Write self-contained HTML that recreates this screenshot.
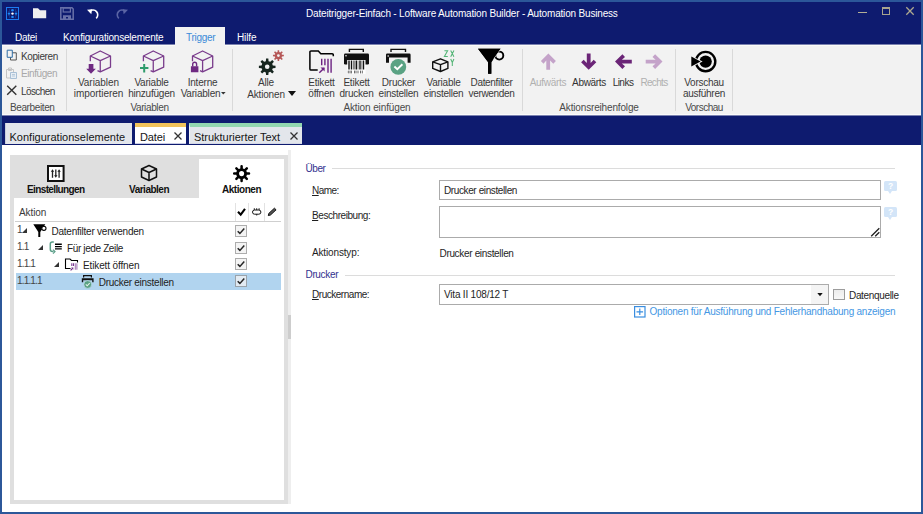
<!DOCTYPE html>
<html><head><meta charset="utf-8">
<style>
*{margin:0;padding:0;box-sizing:border-box}
html,body{width:923px;height:514px;overflow:hidden;background:#fff;font-family:"Liberation Sans",sans-serif}
.a{position:absolute;white-space:nowrap}
#win{position:absolute;left:0;top:0;width:923px;height:514px;border:2px solid #2c5799;background:#fff}
.navy{background:#0e1b6f}
.t{position:absolute;white-space:nowrap;line-height:1}
.rb{font-size:10px;color:#3a3a3a}
.gl{font-size:10px;color:#4a4a4a}
.sep{position:absolute;width:1px;background:#d9d9d9;top:49px;height:62px}
.dis{color:#a8a8a8}
svg{position:absolute;overflow:visible}

.cb{width:12px;height:12px;border:1px solid #a9a9a9;background:linear-gradient(#f3f3f3,#ececec)}
.cb::after{content:"";position:absolute;left:2px;top:2px;width:6px;height:3px;border-left:1.5px solid #222;border-bottom:1.5px solid #222;transform:rotate(-48deg) translate(0px,1px)}
.num{font-size:10px;color:#444}
.sec{font-size:10px;color:#32328e}
.lbl{font-size:10px;color:#1e1e1e}
.val{font-size:10px;color:#1e1e1e}
.inp{border:1px solid #ababab;background:#fff}
.help{width:13px;height:12px}
.help::before{content:"?";position:absolute;left:0;top:0;width:13px;height:10px;background:#d3e5f8;border-radius:1.5px;color:#fff;font-size:8.5px;font-weight:bold;text-align:center;line-height:10px}
.help::after{content:"";position:absolute;left:4px;top:10px;border-left:2.5px solid transparent;border-right:2.5px solid transparent;border-top:3px solid #d3e5f8}
</style></head><body>
<div id="win"></div>
<!-- title bar + menu -->
<div class="a navy" style="left:2px;top:2px;width:919px;height:42px"></div>
<div class="a" style="left:2px;top:44px;width:919px;height:1px;background:#7b82b0"></div>
<div class="a" style="left:2px;top:115px;width:919px;height:1px;background:#7b82b0"></div>
<div class="a navy" style="left:2px;top:116px;width:919px;height:29px"></div>
<div class="a" style="left:2px;top:114px;width:919px;height:1px;background:#fbfbfb"></div>

<!-- app icon -->
<svg style="left:6px;top:7px" width="13" height="13" viewBox="0 0 13 13">
 <rect x="0.5" y="0.5" width="12" height="12" fill="none" stroke="#1e7bf0" stroke-width="1"/>
 <rect x="3" y="3" width="7" height="7" fill="none" stroke="#1a5fc8" stroke-width="0.7" stroke-dasharray="1 1"/>
 <circle cx="6.5" cy="3.3" r="1.2" fill="#1e8af8"/><circle cx="6.5" cy="9.9" r="1.2" fill="#1e8af8"/>
 <circle cx="3" cy="6.6" r="1.2" fill="#1e8af8"/><circle cx="10" cy="6.6" r="1.2" fill="#1e8af8"/>
 <circle cx="6.5" cy="6.6" r="1.2" fill="#fff"/>
</svg>
<!-- folder -->
<svg style="left:33px;top:8px" width="14" height="11" viewBox="0 0 14 11">
 <path d="M0 0.3H5L7 2.3H13.2V10.2H0Z" fill="#efefef"/>
</svg>
<!-- save disabled -->
<svg style="left:60px;top:7px" width="14" height="13" viewBox="0 0 14 13">
 <path d="M0.8 0.8H12L13.2 2V12.2H0.8Z" fill="none" stroke="#6870a8" stroke-width="1.5"/>
 <rect x="3.2" y="1" width="7.2" height="4" fill="none" stroke="#6870a8" stroke-width="1.2"/>
 <path d="M3 8.2H11V12H8V10H6V12H3Z" fill="#6870a8"/>
</svg>
<!-- undo -->
<svg style="left:87px;top:8px" width="14" height="11" viewBox="0 0 14 11">
 <path d="M2.8 3.3A4.6 4.6 0 1 1 9.2 10.3" fill="none" stroke="#fff" stroke-width="1.6"/>
 <path d="M0 1.8L5.2 1.2L4.3 6.2Z" fill="#fff"/>
</svg>
<!-- redo disabled -->
<svg style="left:114px;top:8px" width="14" height="11" viewBox="0 0 14 11">
 <path d="M11.2 3.3A4.6 4.6 0 1 0 4.8 10.3" fill="none" stroke="#5a64a4" stroke-width="1.6"/>
 <path d="M14 1.8L8.8 1.2L9.7 6.2Z" fill="#5a64a4"/>
</svg>

<div class="t" style="left:306px;top:9.00px;font-size:10px;color:#fff;letter-spacing:-0.18px">Dateitrigger-Einfach - Loftware Automation Builder - Automation Business</div>

<!-- window controls -->
<div class="a" style="left:858px;top:11.5px;width:8.5px;height:1.5px;background:#b3ae95"></div>
<div class="a" style="left:881.5px;top:6.5px;width:8.5px;height:8px;border:1px solid #a8a48e;border-top-width:2px"></div>
<svg style="left:905.5px;top:7px" width="8" height="8" viewBox="0 0 8 8"><path d="M0.3 0.3L7.7 7.7M7.7 0.3L0.3 7.7" stroke="#ada88f" stroke-width="1.3"/></svg>

<!-- menu tabs -->
<div class="t" style="left:15px;top:32.60px;font-size:10px;color:#fff;letter-spacing:-0.3px">Datei</div>
<div class="t" style="left:63px;top:32.60px;font-size:10px;color:#fff;letter-spacing:-0.21px">Konfigurationselemente</div>
<div class="a" style="left:175px;top:27px;width:50px;height:19px;background:#f2f2f2"></div>
<div class="t" style="left:186px;top:32.60px;font-size:10px;color:#3b8ad8;letter-spacing:-0.29px">Trigger</div>
<div class="t" style="left:237px;top:32.60px;font-size:10px;color:#fff;letter-spacing:-0.1px">Hilfe</div>

<!-- ribbon -->
<div class="a" style="left:2px;top:45px;width:919px;height:69px;background:#f2f2f2"></div>
<div class="a" style="left:2px;top:45px;width:173px;height:1px;background:#fcfcf8"></div>
<div class="a" style="left:225px;top:45px;width:696px;height:1px;background:#fcfcf8"></div>


<!-- Bearbeiten group -->
<svg style="left:2px;top:46px" width="20" height="54" viewBox="0 0 20 54">
 <path d="M8.5 6.8H14.3V14H8.5Z" fill="none" stroke="#555" stroke-width="1"/>
 <path d="M5.2 4.2H10.3V11.3H5.2Z" fill="#f2f2f2" stroke="#2f6da6" stroke-width="1"/>
 <path d="M4.5 23.5H11.5V32H4.5Z" fill="none" stroke="#c4c4c4" stroke-width="1"/>
 <path d="M6.5 22H9.5V24.5H6.5Z" fill="none" stroke="#c4c4c4" stroke-width="1"/>
 <path d="M8.5 26.5H14.5V32.5H8.5Z" fill="#e8eef4" stroke="#a9c0d6" stroke-width="1"/>
 <path d="M10 28.5H13M10 30H13" stroke="#a9c0d6" stroke-width="0.8"/>
 <path d="M5.2 39.8L14.3 48.8M14.3 39.8L5.2 48.8" stroke="#333" stroke-width="1.4"/>
</svg>
<div class="t rb" style="left:21px;top:51.70px;letter-spacing:-0.4px">Kopieren</div>
<div class="t rb dis" style="left:21px;top:68.70px;letter-spacing:-0.42px">Einfügen</div>
<div class="t rb" style="left:21px;top:86.50px;letter-spacing:-0.6px">Löschen</div>
<div class="t gl" style="left:10px;top:102.90px;letter-spacing:-0.39px">Bearbeiten</div>
<div class="sep" style="left:66px"></div>

<!-- Variablen group -->
<svg style="left:80px;top:46px" width="40" height="32" viewBox="0 0 40 32">
 <g fill="none" stroke="#7a3c8c" stroke-width="1.3" stroke-linejoin="round">
  <path d="M10.3 15.3V10L20.25 5L30.5 10V21.2L20.25 25.9L17.5 24.6"/>
  <path d="M10.3 10L20.25 14.6L30.5 10M20.25 14.6V25.9"/>
 </g>
 <path d="M8.7 18H13.4V22.7H15.9L11 27.7L6.2 22.7H8.7Z" fill="#6f2a82"/>
</svg>
<svg style="left:135px;top:46px" width="40" height="32" viewBox="0 0 40 32">
 <g fill="none" stroke="#7a3c8c" stroke-width="1.3" stroke-linejoin="round">
  <path d="M8.4 15.3V10L18.26 5L28.7 10V21.2L18.26 25.9L15.6 24.6"/>
  <path d="M8.4 10L18.26 14.6L28.7 10M18.26 14.6V25.9"/>
 </g>
 <path d="M9.2 18V26.5M5 22.1H13.4" stroke="#2f9c6c" stroke-width="2"/>
</svg>
<svg style="left:185px;top:46px" width="40" height="32" viewBox="0 0 40 32">
 <g fill="none" stroke="#7a3c8c" stroke-width="1.3" stroke-linejoin="round">
  <path d="M7.5 15.3V10L17.6 5L27.7 10V21.2L17.6 25.9L15 24.6"/>
  <path d="M7.5 10L17.6 14.6L27.7 10M17.6 14.6V25.9"/>
 </g>
 <path d="M7.7 20.5V18.2A1.95 1.95 0 0 1 11.6 18.2V20.5" fill="none" stroke="#6f2a82" stroke-width="1.4"/>
 <rect x="5.9" y="20.25" width="7.5" height="6" fill="#6f2a82"/>
</svg>
<div class="t rb" style="left:58px;top:78.00px;width:81px;text-align:center;letter-spacing:-0.05px">Variablen<br><span style="position:relative;top:1.3px">importieren</span></div>
<div class="t rb" style="left:111px;top:78.00px;width:81px;text-align:center;letter-spacing:-0.22px">Variable<br><span style="position:relative;top:1.3px">hinzufügen</span></div>
<div class="t rb" style="left:162px;top:78.00px;width:81px;text-align:center;letter-spacing:-0.2px">Interne<br><span style="position:relative;top:1.3px;left:-2px">Variablen</span></div>
<svg style="left:221px;top:92px" width="5" height="3" viewBox="0 0 5 3"><path d="M0 0H4.6L2.3 2.6Z" fill="#333"/></svg>
<div class="t gl" style="left:109px;top:102.90px;width:81px;text-align:center;letter-spacing:-0.37px">Variablen</div>
<div class="sep" style="left:232px"></div>

<!-- Aktion einfuegen group -->
<svg style="left:252px;top:46px" width="40" height="34" viewBox="0 0 40 34">
 <path fill-rule="evenodd" fill="#17261f" d="M13.85 15.16 L14.05 12.48 L16.35 12.48 L16.55 15.16 L18.23 15.85 L20.27 14.10 L21.90 15.73 L20.15 17.77 L20.84 19.45 L23.52 19.65 L23.52 21.95 L20.84 22.15 L20.15 23.83 L21.90 25.87 L20.27 27.50 L18.23 25.75 L16.55 26.44 L16.35 29.12 L14.05 29.12 L13.85 26.44 L12.17 25.75 L10.13 27.50 L8.50 25.87 L10.25 23.83 L9.56 22.15 L6.88 21.95 L6.88 19.65 L9.56 19.45 L10.25 17.77 L8.50 15.73 L10.13 14.10 L12.17 15.85Z M12.90 20.80 a2.30 2.30 0 1 0 4.60 0 a2.30 2.30 0 1 0 -4.60 0Z"/>
 <path fill-rule="evenodd" fill="#b65858" d="M25.54 6.00 L25.65 4.15 L27.15 4.15 L27.26 6.00 L28.33 6.45 L29.72 5.21 L30.79 6.28 L29.55 7.67 L30.00 8.74 L31.85 8.85 L31.85 10.35 L30.00 10.46 L29.55 11.53 L30.79 12.92 L29.72 13.99 L28.33 12.75 L27.26 13.20 L27.15 15.05 L25.65 15.05 L25.54 13.20 L24.47 12.75 L23.08 13.99 L22.01 12.92 L23.25 11.53 L22.80 10.46 L20.95 10.35 L20.95 8.85 L22.80 8.74 L23.25 7.67 L22.01 6.28 L23.08 5.21 L24.47 6.45Z M25.00 9.60 a1.40 1.40 0 1 0 2.80 0 a1.40 1.40 0 1 0 -2.80 0Z"/>
</svg>
<div class="t rb" style="left:230px;width:72px;text-align:center;line-height:12.2px;top:76.9px;letter-spacing:-0.17px">Alle<br>Aktionen</div>
<svg style="left:288px;top:91px" width="8" height="5" viewBox="0 0 8 5"><path d="M0 0H8L4 5Z" fill="#111"/></svg>

<svg style="left:304px;top:46px" width="34" height="32" viewBox="0 0 34 32">
 <path d="M13.7 24H7A1.1 1.1 0 0 1 5.9 22.9V6.1A1.1 1.1 0 0 1 7 5H14.3L16.8 7.8H28.2A1.1 1.1 0 0 1 29.3 8.9V10.3" fill="none" stroke="#000" stroke-width="1.5"/>
 <path d="M17.7 12.8V19.3M20.9 12.8V19.3M24 12.8V26.8M27.1 12.8V26.8" stroke="#6d2383" stroke-width="1.4"/>
 <path d="M15.3 26.8L20 22.3" stroke="#6d2383" stroke-width="1.5"/>
 <path d="M16.5 21.5H20.6V25.6Z" fill="#6d2383"/>
</svg>
<svg style="left:340px;top:46px" width="34" height="32" viewBox="0 0 34 32">
 <path d="M9.4 6V3.4H23.3V6" fill="none" stroke="#111" stroke-width="1.4"/>
 <rect x="4" y="7.5" width="25" height="11" rx="1.2" fill="#111"/>
 <rect x="5.3" y="9" width="1.4" height="1.4" fill="#ddd"/>
 <rect x="7.2" y="14" width="18.3" height="14" fill="#fff"/>
 <path d="M9 14.5V23.5M11.5 14.5V23.5M16.3 14.5V23.5M20 14.5V23.5M23.5 14.5V23.5" stroke="#111" stroke-width="1.4"/>
 <path d="M13.5 14.5V23.5M14.6 14.5V23.5M18 14.5V23.5M21.8 14.5V23.5" stroke="#333" stroke-width="0.6"/>
 <path d="M8.3 24.6V27.4M10 24.6V27.4M11.4 24.6V27.4M14.5 24.6V27.4M16 24.6V27.4M18 24.6V27.4M20.5 24.6V27.4M22.3 24.6V27.4" stroke="#444" stroke-width="0.8"/>
</svg>
<svg style="left:381px;top:46px" width="34" height="32" viewBox="0 0 34 32">
 <path d="M10 6V3.4H24.5V6" fill="none" stroke="#111" stroke-width="1.4"/>
 <path d="M6.2 7.5H28.4A1.2 1.2 0 0 1 29.6 8.7V16.8H26.6V11.5H8V16.8H5V8.7A1.2 1.2 0 0 1 6.2 7.5Z" fill="#111"/>
 <rect x="6.5" y="9.3" width="1.4" height="1.4" fill="#ddd"/>
 <circle cx="17.3" cy="20.9" r="7.9" fill="#5aa283"/>
 <path d="M13.4 20.5L16.3 23.2L21.4 18.3" fill="none" stroke="#fff" stroke-width="1.9"/>
</svg>
<svg style="left:428px;top:46px" width="34" height="32" viewBox="0 0 34 32">
 <g fill="none" stroke="#111" stroke-width="1.4" stroke-linejoin="round">
  <path d="M12.5 12.8L19.9 15.9V22.4L12.5 25.5L4.7 22.4V15.9Z"/>
  <path d="M4.7 15.9L12.5 18.7L19.9 15.9M12.5 18.7V25.5"/>
 </g>
 <path d="M16.4 4.7H19.6L16.4 10.4H19.8M22.7 4.5L25.9 10.8M25.9 4.5L22.7 10.8M22.7 13L24.3 16.5L25.9 13M24.3 16.5V20" fill="none" stroke="#52b475" stroke-width="1.05"/>
</svg>
<svg style="left:474px;top:46px" width="34" height="32" viewBox="0 0 34 32">
 <circle cx="25.3" cy="9.6" r="4" fill="#f2f2f2" stroke="#000" stroke-width="1.9"/>
 <path d="M4 2.8H26.8L17.4 16.2V27.7H14V16.2Z" fill="#000"/>
 <path d="M26.8 2.8L19.2 13.5" stroke="#f2f2f2" stroke-width="0.8" fill="none"/>
 <path d="M4 2.8H26.3L17.2 15.8V27.7H14.2V15.8Z" fill="#000"/>
</svg>
<div class="t rb" style="left:294px;top:78.00px;width:55px;text-align:center;letter-spacing:-0.21px">Etikett<br><span style="position:relative;top:1.3px">öffnen</span></div>
<div class="t rb" style="left:329px;top:78.00px;width:55px;text-align:center;letter-spacing:-0.23px">Etikett<br><span style="position:relative;top:1.3px">drucken</span></div>
<div class="t rb" style="left:371px;top:78.00px;width:55px;text-align:center;letter-spacing:-0.25px">Drucker<br><span style="position:relative;top:1.3px">einstellen</span></div>
<div class="t rb" style="left:416px;top:78.00px;width:55px;text-align:center;letter-spacing:-0.24px">Variable<br><span style="position:relative;top:1.3px">einstellen</span></div>
<div class="t rb" style="left:464px;top:78.00px;width:55px;text-align:center;letter-spacing:-0.33px">Datenfilter<br><span style="position:relative;top:1.3px">verwenden</span></div>
<div class="t gl" style="left:327px;top:102.90px;width:100px;text-align:center;letter-spacing:-0.12px">Aktion einfügen</div>
<div class="sep" style="left:522px"></div>

<!-- Aktionsreihenfolge -->
<svg style="left:535px;top:48px" width="140" height="28" viewBox="0 0 140 28">
 <path d="M13.4 5.6L20.9 13.1L18.3 15.7L15.1 12.5V21.8H11.3V12.5L8.5 15.7L5.9 13.1Z" fill="#c4a3c9"/>
 <path d="M53.7 21.8L46.1 14.3L48.7 11.7L51.8 14.9V5.6H55.6V14.9L58.7 11.7L61.3 14.3Z" fill="#6b2577"/>
 <path d="M80 13.6L87.4 6.3L90 8.9L86.9 11.8H96.8V15.4H86.9L90 18.3L87.4 20.9Z" fill="#6b2577"/>
 <path d="M127.5 13.6L120.1 6.3L117.5 8.9L120.6 11.8H110.7V15.4H120.6L117.5 18.3L120.1 20.9Z" fill="#c4a3c9"/>
</svg>
<div class="t rb dis" style="left:527px;top:78.30px;width:42px;text-align:center;color:#b0b0b0;letter-spacing:-0.3px">Aufwärts</div>
<div class="t rb" style="left:568px;top:78.30px;width:42px;text-align:center;color:#333;letter-spacing:-0.33px">Abwärts</div>
<div class="t rb" style="left:603px;top:78.30px;width:40px;text-align:center;color:#333;letter-spacing:-0.52px">Links</div>
<div class="t rb dis" style="left:634px;top:78.30px;width:40px;text-align:center;color:#b0b0b0;letter-spacing:-0.65px">Rechts</div>
<div class="t gl" style="left:549px;top:102.90px;width:100px;text-align:center;letter-spacing:-0.16px">Aktionsreihenfolge</div>
<div class="sep" style="left:675px"></div>

<!-- Vorschau -->
<svg style="left:686px;top:46px" width="36" height="32" viewBox="0 0 36 32">
 <circle cx="19.6" cy="15.6" r="9.7" fill="none" stroke="#000" stroke-width="2.4"/>
 <circle cx="19.6" cy="15.6" r="6.2" fill="#000"/>
 <path d="M4.3 9.2L16.6 15.6L4.3 22Z" fill="#f3f3f3"/>
 <path d="M5.3 10.6L14.6 15.6L5.3 20.5Z" fill="#000"/>
</svg>
<div class="t rb" style="left:674px;top:78.00px;width:60px;text-align:center;letter-spacing:-0.28px">Vorschau<br><span style="position:relative;top:1.3px">ausführen</span></div>
<div class="t gl" style="left:674px;top:102.90px;width:60px;text-align:center;letter-spacing:-0.51px">Vorschau</div>
<div class="sep" style="left:732px"></div>


<!-- doc tabs -->
<div class="a" style="left:5px;top:123px;width:127px;height:21px;background:#e3e6eb;border-left:1px solid #c9cfdb"></div>
<div class="t" style="left:9.5px;top:131.6px;font-size:11px;color:#161616">Konfigurationselemente</div>
<div class="a" style="left:135px;top:123px;width:51px;height:21px;background:#fff;border-top:4px solid #f2c35a;border-bottom:1px solid #c8cce6"></div>
<div class="t" style="left:140px;top:131.6px;font-size:11px;color:#161616;letter-spacing:-0.14px">Datei</div>
<svg style="left:174px;top:132px" width="8" height="8" viewBox="0 0 8 8"><path d="M0.5 0.5L7.5 7.5M7.5 0.5L0.5 7.5" stroke="#333" stroke-width="1.3"/></svg>
<div class="a" style="left:189px;top:123px;width:113px;height:21px;background:#e3e6eb;border-top:4px solid #92d7b0;border-left:1px solid #f4f5f8;border-bottom:1px solid #d4d8e6"></div>
<div class="t" style="left:194px;top:131.6px;font-size:11px;color:#161616;letter-spacing:-0.03px">Strukturierter Text</div>
<svg style="left:290px;top:132px" width="8" height="8" viewBox="0 0 8 8"><path d="M0.5 0.5L7.5 7.5M7.5 0.5L0.5 7.5" stroke="#333" stroke-width="1.3"/></svg>

<!-- left panel -->
<div class="a" style="left:10px;top:155px;width:278px;height:349px;background:#fff;border:4px solid #dfdfdf"></div>
<div class="a" style="left:14px;top:159px;width:270px;height:39px;background:#dfdfdf"></div>
<div class="a" style="left:199px;top:159px;width:85px;height:40px;background:#fff"></div>
<div class="a" style="left:288px;top:150px;width:3px;height:354px;background:#eeeeee"></div>
<div class="a" style="left:288px;top:315px;width:3px;height:24px;background:#cdcdcd"></div>

<svg style="left:47px;top:165px" width="18" height="17" viewBox="0 0 18 17">
 <rect x="1" y="1" width="15.6" height="15" fill="#fff" stroke="#111" stroke-width="2"/>
 <path d="M5.5 6V12.8M8.8 4.5V11M12.1 6V12.8" stroke="#222" stroke-width="1.3"/>
 <path d="M3.8 6.8L5.5 4.3L7.2 6.8ZM7.1 10.3L8.8 12.8L10.5 10.3ZM10.4 6.8L12.1 4.3L13.8 6.8Z" fill="#222"/>
</svg>
<div class="t" style="left:27px;top:184.50px;font-size:10px;font-weight:bold;color:#111;letter-spacing:-0.62px">Einstellungen</div>
<svg style="left:139px;top:163.7px" width="20" height="18" viewBox="0 0 20 18">
 <g fill="none" stroke="#111" stroke-width="1.5" stroke-linejoin="round">
  <path d="M10 1.5L17.5 5V13L10 16.5L2.5 13V5Z"/>
  <path d="M2.5 5L10 8.5L17.5 5M10 8.5V16.5"/>
 </g>
</svg>
<div class="t" style="left:129px;top:184.50px;font-size:10px;font-weight:bold;color:#111;letter-spacing:-0.49px">Variablen</div>
<svg style="left:231.5px;top:165px" width="20" height="20" viewBox="0 0 20 20">
 <circle cx="9.6" cy="8.6" r="4.0" fill="none" stroke="#000" stroke-width="2.9"/>
 <path d="M9.60 4.00L9.60 1.20 M12.85 5.35L14.83 3.37 M14.20 8.60L17.00 8.60 M12.85 11.85L14.83 13.83 M9.60 13.20L9.60 16.00 M6.35 11.85L4.37 13.83 M5.00 8.60L2.20 8.60 M6.35 5.35L4.37 3.37" stroke="#000" stroke-width="2.5" stroke-linecap="round"/>
</svg>
<div class="t" style="left:222px;top:184.50px;font-size:10px;font-weight:bold;color:#111;letter-spacing:-0.47px">Aktionen</div>

<!-- tree header -->
<div class="t" style="left:19px;top:208.08px;font-size:10px;color:#3a3a3a;letter-spacing:-0.1px">Aktion</div>
<div class="a" style="left:15px;top:221px;width:266px;height:1px;background:#cfcfcf"></div>
<div class="a" style="left:235px;top:203px;width:1px;height:18px;background:#e2e2e2"></div>
<div class="a" style="left:248px;top:203px;width:1px;height:18px;background:#e2e2e2"></div>
<div class="a" style="left:264px;top:203px;width:1px;height:18px;background:#e2e2e2"></div>
<svg style="left:236px;top:207px" width="12" height="10" viewBox="0 0 12 10"><path d="M2 4.75L4.7 7.6L9 1.8" fill="none" stroke="#000" stroke-width="2.1"/></svg>
<svg style="left:251px;top:206px" width="11" height="11" viewBox="0 0 11 11"><rect x="1.5" y="4" width="8.4" height="4.2" rx="2.1" fill="none" stroke="#111" stroke-width="1"/><path d="M3.3 2.2V4M5.7 2.2V4M8.1 2.2V4M5.7 8.2V9.5" stroke="#111" stroke-width="0.9"/></svg>
<svg style="left:267px;top:206px" width="10" height="11" viewBox="0 0 10 11"><path d="M1.3 9.6L1.8 7.4L7.4 2.2L9.1 3.8L3.5 9Z" fill="#555" stroke="#000" stroke-width="0.9" stroke-linejoin="round"/></svg>

<!-- selected row -->
<div class="a" style="left:16px;top:273px;width:265px;height:17px;background:#b1d4ef"></div>

<!-- rows -->
<div class="t num" style="left:17px;top:225.48px;letter-spacing:-0.83px">1</div>
<svg style="left:22px;top:228px" width="5" height="5" viewBox="0 0 5 5"><path d="M5 0V5H0Z" fill="#333"/></svg>
<svg style="left:33px;top:224px" width="14" height="14" viewBox="0 0 14 14">
 <path d="M0.3 0.2H12.3L7.3 8V13H5.3V8Z" fill="#000"/>
 <circle cx="10.9" cy="4.3" r="2.1" fill="#fff" stroke="#000" stroke-width="1.1"/>
</svg>
<div class="t" style="left:51.5px;top:227.48px;font-size:10px;color:#222;letter-spacing:-0.23px">Datenfilter verwenden</div>

<div class="t num" style="left:17px;top:242.48px;letter-spacing:-0.83px">1.1</div>
<svg style="left:38px;top:245px" width="5" height="5" viewBox="0 0 5 5"><path d="M5 0V5H0Z" fill="#333"/></svg>
<svg style="left:49px;top:241px" width="14" height="13" viewBox="0 0 14 13">
 <path d="M4.8 0.9H3.3Q1.3 0.9 1.3 3V8.3Q1.3 10.6 3.6 10.6H4.6" fill="none" stroke="#5a9e88" stroke-width="1.5"/>
 <path d="M4 8.6L6 10.6L4 12.6" fill="none" stroke="#5a9e88" stroke-width="1.2"/>
 <path d="M6 3.3H12.8M6 5.6H12.8M6 7.9H12.8" stroke="#000" stroke-width="1.4"/>
</svg>
<div class="t" style="left:67px;top:244.3px;font-size:10px;color:#222;letter-spacing:-0.37px">Für jede Zeile</div>

<div class="t num" style="left:17px;top:259.48px;letter-spacing:-0.83px">1.1.1</div>
<svg style="left:54px;top:262px" width="5" height="5" viewBox="0 0 5 5"><path d="M5 0V5H0Z" fill="#333"/></svg>
<svg style="left:65px;top:258px" width="14" height="14" viewBox="0 0 14 14">
 <path d="M5.5 10.5H0.5V1H5L6.5 2.5H12.5V4.5" fill="none" stroke="#000" stroke-width="1.1"/>
 <path d="M6.8 5.2V8M8.5 5.2V8" stroke="#7a3590" stroke-width="1.1"/>
 <path d="M10.3 5.2V11.8M11.9 5.2V11.8" stroke="#a57ab5" stroke-width="1.1"/>
 <path d="M5.6 12.3L7.6 10.3" stroke="#6d2383" stroke-width="1.2"/>
 <path d="M6.2 9.6H8.3V11.7Z" fill="#6d2383"/>
</svg>
<div class="t" style="left:83px;top:261.28px;font-size:10px;color:#222;letter-spacing:-0.13px">Etikett öffnen</div>

<div class="t num" style="left:17px;top:276.18px;letter-spacing:-0.83px">1.1.1.1</div>
<svg style="left:81px;top:274px" width="14" height="14" viewBox="0 0 14 14">
 <path d="M2.6 3.6V1.6H10.4V3.6" fill="none" stroke="#111" stroke-width="1.2"/>
 <path d="M0.8 4.2H12.6V8.2H11.2V6.2H2.2V8.2H0.8Z" fill="#111"/>
 <circle cx="6.7" cy="10.5" r="3.9" fill="#5aa283" stroke="#c6def0" stroke-width="0.7"/>
 <path d="M4.8 10.4L6.2 11.8L8.7 9.2" fill="none" stroke="#e6f2ec" stroke-width="1.1"/>
</svg>
<div class="t" style="left:98.7px;top:277.88px;font-size:10px;color:#222;letter-spacing:-0.27px">Drucker einstellen</div>

<!-- checkboxes -->
<svg style="left:235px;top:225px" width="12" height="12" viewBox="0 0 12 12"><rect x="0.5" y="0.5" width="11" height="11" fill="#f4f4f4" stroke="#adadad"/><path d="M2.7 6.2L4.9 8.4L9.3 3.6" fill="none" stroke="#262626" stroke-width="1.5"/></svg>
<svg style="left:235px;top:242px" width="12" height="12" viewBox="0 0 12 12"><rect x="0.5" y="0.5" width="11" height="11" fill="#f4f4f4" stroke="#adadad"/><path d="M2.7 6.2L4.9 8.4L9.3 3.6" fill="none" stroke="#262626" stroke-width="1.5"/></svg>
<svg style="left:235px;top:258px" width="12" height="12" viewBox="0 0 12 12"><rect x="0.5" y="0.5" width="11" height="11" fill="#f4f4f4" stroke="#adadad"/><path d="M2.7 6.2L4.9 8.4L9.3 3.6" fill="none" stroke="#262626" stroke-width="1.5"/></svg>
<svg style="left:235px;top:275px" width="12" height="12" viewBox="0 0 12 12"><rect x="0.5" y="0.5" width="11" height="11" fill="#e2ebf3" stroke="#9aa3ab"/><path d="M2.7 6.2L4.9 8.4L9.3 3.6" fill="none" stroke="#262626" stroke-width="1.5"/></svg>

<!-- right form -->
<div class="t sec" style="left:305.5px;top:164.00px;letter-spacing:-0.45px">Über</div>
<div class="a" style="left:332px;top:168px;width:563px;height:1px;background:#dcdcdc"></div>
<div class="t lbl" style="left:312px;top:186.00px;letter-spacing:-0.52px"><u>N</u>ame:</div>
<div class="a inp" style="left:439px;top:180px;width:442px;height:20px"></div>
<div class="t val" style="left:444px;top:185.50px;letter-spacing:-0.39px">Drucker einstellen</div>
<div class="a help" style="left:884px;top:181px"></div>
<div class="t lbl" style="left:312px;top:210.50px;letter-spacing:-0.43px"><u>B</u>eschreibung:</div>
<div class="a inp" style="left:439px;top:206px;width:442px;height:32px"></div>
<svg style="left:870px;top:227px" width="10" height="10" viewBox="0 0 10 10"><path d="M1.2 9.3L9.3 1.2M5.2 9.3L9.3 5.2" stroke="#222" stroke-width="1.3"/></svg>
<div class="a help" style="left:884px;top:207px"></div>
<div class="t lbl" style="left:312px;top:247.50px;letter-spacing:-0.15px">Aktionstyp:</div>
<div class="t val" style="left:439.5px;top:248.50px;letter-spacing:-0.33px">Drucker einstellen</div>

<div class="t sec" style="left:305.5px;top:269.80px;letter-spacing:-0.34px">Drucker</div>
<div class="a" style="left:345px;top:275px;width:550px;height:1px;background:#dcdcdc"></div>
<div class="t lbl" style="left:312px;top:289.90px;letter-spacing:-0.47px"><u>D</u>ruckername:</div>
<div class="a inp" style="left:439px;top:284px;width:390px;height:21px"></div>
<div class="a" style="left:811px;top:285px;width:17px;height:19px;background:#f4f4f4"></div>
<svg style="left:817px;top:292.5px" width="6" height="4" viewBox="0 0 6 4"><path d="M0.3 0H5.7L3 3.2Z" fill="#111"/></svg>
<div class="t val" style="left:444px;top:289.50px;letter-spacing:-0.2px">Vita II 108/12 T</div>
<div class="a" style="left:833px;top:288.5px;width:11.5px;height:11.5px;border:1px solid #9c9c9c;background:linear-gradient(#ececec,#f8f8f8)"></div>
<div class="t lbl" style="left:849px;top:291.00px;letter-spacing:-0.33px">Datenquelle</div>
<svg style="left:634px;top:306px" width="12" height="12" viewBox="0 0 12 12"><rect x="0.6" y="0.6" width="10.4" height="10.4" fill="none" stroke="#3a8ee0" stroke-width="1.2"/><path d="M5.8 2.5V9.1M2.5 5.8H9.1" stroke="#3a8ee0" stroke-width="1.2"/></svg>
<div class="t" style="left:649.5px;top:307.20px;font-size:10px;color:#4597e4;letter-spacing:-0.23px">Optionen für Ausführung und Fehlerhandhabung anzeigen</div>

</body></html>
